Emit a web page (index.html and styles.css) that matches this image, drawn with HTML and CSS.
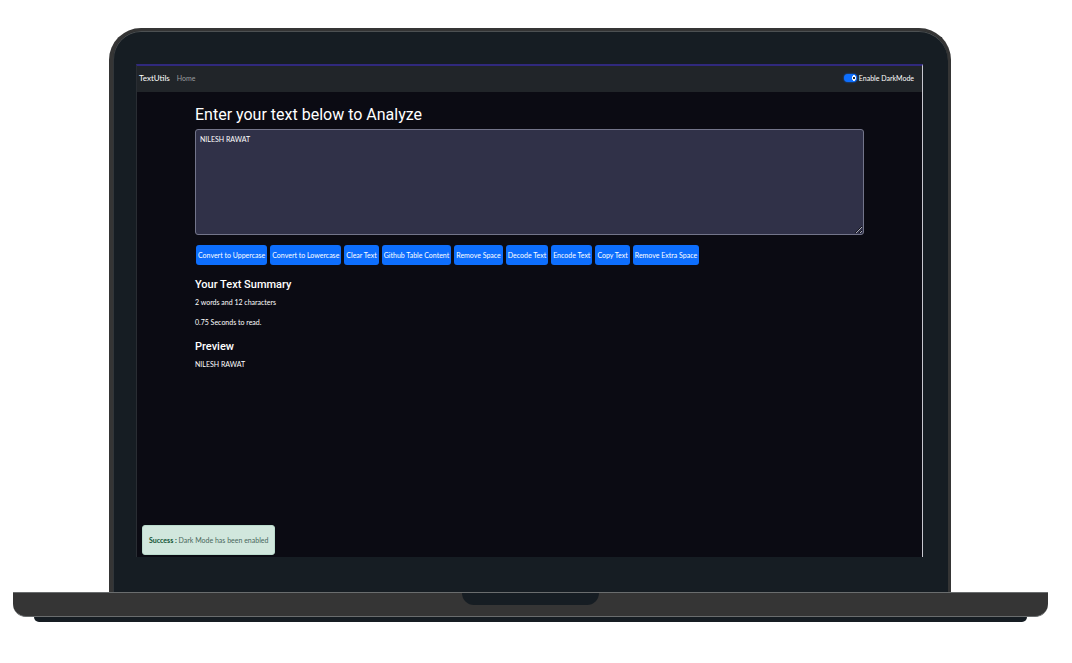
FILE: index.html
```html
<!DOCTYPE html>
<html lang="en">
<head>
<meta charset="utf-8">
<meta name="viewport" content="width=device-width, initial-scale=1">
<title>TextUtils</title>
<link rel="stylesheet" href="styles.css">
</head>
<body>
<div class="laptop">
  <div class="lid">
    <div class="screen">
      <nav class="navbar">
        <a class="brand" href="#">TextUtils</a>
        <a class="nav-link" href="#">Home</a>
        <label class="mode"><input class="switch" type="checkbox" role="switch" checked>Enable DarkMode</label>
      </nav>
      <main class="content">
        <h1 class="title"><label for="text">Enter your text below to Analyze</label></h1>
        <textarea class="editor" id="text">NILESH RAWAT</textarea>
        <div class="actions">
          <button class="btn" type="button">Convert to Uppercase</button>
          <button class="btn" type="button">Convert to Lowercase</button>
          <button class="btn" type="button">Clear Text</button>
          <button class="btn" type="button">Github Table Content</button>
          <button class="btn" type="button">Remove Space</button>
          <button class="btn" type="button">Decode Text</button>
          <button class="btn" type="button">Encode Text</button>
          <button class="btn" type="button">Copy Text</button>
          <button class="btn" type="button">Remove Extra Space</button>
        </div>
        <h2 class="heading">Your Text Summary</h2>
        <p class="line">2 words and 12 characters</p>
        <p class="line">0.75 Seconds to read.</p>
        <h2 class="heading">Preview</h2>
        <p class="line">NILESH RAWAT</p>
      </main>
      <div class="alert" role="status"><strong>Success :</strong> Dark Mode has been enabled</div>
    </div>
  </div>
  <div class="base"><div class="notch"></div></div>
  <div class="foot"></div>
</div>
</body>
</html>
```
FILE: styles.css
```css
* { box-sizing: border-box; }

body {
  margin: 0;
  background: #fff;
  color: #fff;
  font-family: Lato, "Open Sans", sans-serif;
  font-size: 7px;
  line-height: 12px;
}

.laptop {
  display: flex;
  flex-direction: column;
  min-height: 100vh;
  padding: 28px 24px 41px 13px;
}

.lid {
  display: flex;
  flex: 1;
  margin: 0 97px 0 96px;
  padding: 33px 25px 35px 23px;
  border: solid #353535;
  border-width: 3px 3px 0 4px;
  border-radius: 32px 32px 0 0;
  background: #161d23;
  box-shadow: inset 0 1px 0 #4c5052, inset 1px 0 0 #303539;
}

.screen {
  display: flex;
  flex: 1;
  flex-direction: column;
  border-top: 2px solid #30297d;
  border-left: 1px solid #292d33;
  border-right: 1px solid #c8c8d0;
  background: #0b0b13;
}

.navbar {
  display: flex;
  align-items: center;
  gap: 7px;
  height: 26px;
  padding: 0 8px 2px 2px;
  background: #212529;
}

.brand {
  color: #fff;
  font-size: 8px;
  text-decoration: none;
}

.nav-link {
  color: #9b9d9f;
  text-decoration: none;
}

.mode {
  display: flex;
  align-items: center;
  gap: 2px;
  margin-left: auto;
}

.switch {
  width: 13px;
  height: 8px;
  margin: 0;
  appearance: none;
  border-radius: 4px;
  background: radial-gradient(ellipse 2px 3px at 10px 4px, #212529 30%, #fff 50%, #fff 85%, transparent) #0d6efd;
  box-shadow: 0 0 2px #0d6efd;
}

.content {
  flex: 1;
  padding: 11px 58px 0;
}

.title {
  margin: 0 0 3px;
  font-family: Roboto, sans-serif;
  font-size: 16px;
  font-weight: 400;
  line-height: 23px;
}

.editor {
  display: block;
  width: 100%;
  height: 106px;
  padding: 3px 4px;
  border: 1px solid #73758a;
  border-radius: 3px;
  background: #303148;
  color: #fff;
  font: inherit;
  resize: vertical;
}

.actions {
  display: flex;
  flex-wrap: wrap;
  gap: 3px;
  padding: 10px 1px 11px;
}

.btn {
  height: 20px;
  padding: 0 2px;
  border: 0;
  border-radius: 3px;
  background: #0d6efd;
  color: #fff;
  font: inherit;
}

.heading {
  margin: 0 0 3px;
  font-family: Roboto, sans-serif;
  font-size: 11px;
  font-weight: 500;
  line-height: 17px;
}

.line { margin: 0 0 8px; }

.line + .heading { margin-top: 10px; }

.alert {
  align-self: flex-start;
  margin: 0 0 2px 5px;
  padding: 8px 6px;
  border: 1px solid #badbcc;
  border-radius: 3px;
  background: #d1e7dd;
  color: #48665a;
}

.alert strong { color: #0f5132; }

.base {
  display: flex;
  justify-content: center;
  height: 25px;
  border: solid #6a6d6e;
  border-width: 1px 0;
  border-radius: 0 0 13px 13px;
  background: #353535;
}

.notch {
  width: 137px;
  height: 12px;
  border-radius: 0 0 14px 14px;
  background: #161d23;
}

.foot {
  height: 5px;
  margin: 0 21px;
  border-radius: 0 0 5px 5px;
  background: #161d23;
}
```
